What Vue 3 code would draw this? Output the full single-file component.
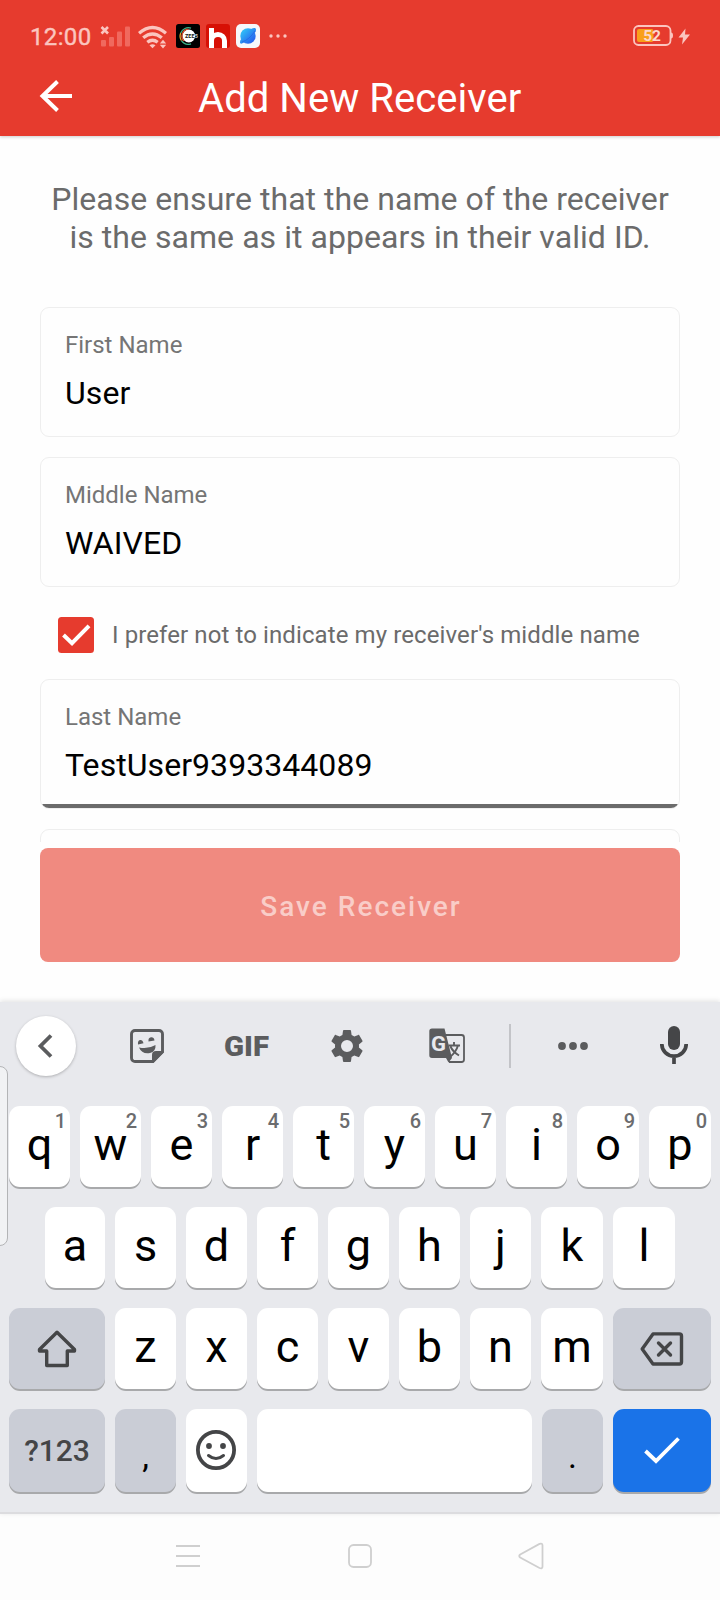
<script setup>
const topKeys = 'qwertyuiop'.split('').map((letter, i) => ({ letter, digit: (i + 1) % 10 }))
const homeKeys = 'asdfghjkl'.split('')
const bottomKeys = 'zxcvbnm'.split('')
</script>

<template>
  <div class="screen">
    <header class="header">
      <div class="status">
        <span class="clock">12:00</span>
        <svg class="signal" width="30" height="24" viewBox="0 0 30 24">
          <path d="M1.500 3l6.500 6.500M8 3l-6.500 6.500" stroke="#fbc5bf" stroke-width="2.600" />
          <g fill="#f0695e">
            <rect x="1" y="16" width="5" height="6.500" rx="1" />
            <rect x="9" y="13" width="5" height="9.500" rx="1" />
            <rect x="17" y="7.500" width="5" height="15" rx="1" />
            <rect x="25" y="2.500" width="5" height="20" rx="1" />
          </g>
        </svg>
        <svg class="wifi" width="29" height="24" viewBox="0 0 29 24">
          <g fill="none" stroke="#fbc5bf" stroke-width="3.300">
            <path d="M1 8.200Q14.500 -3.200 28 8.200" />
            <path d="M5.200 12.800Q14.500 5.200 23.800 12.800" />
            <path d="M9.300 17.200Q14.500 13.200 19.700 17.200" />
          </g>
          <path d="M11.500 20.300Q14.500 18.300 17.500 20.300L14.500 23.300z" fill="#fbc5bf" />
          <path d="M25 14.800l3.200 3.700h-6.400zM25 23.500l3.200-3.700h-6.400z" fill="#fbc5bf" />
        </svg>
        <svg class="app first" width="24" height="24" viewBox="0 0 24 24">
          <rect width="24" height="24" rx="2.500" fill="#000" />
          <circle cx="12.800" cy="12" r="6.400" fill="#fff" />
          <g fill="none" stroke-width="1.300">
            <path d="M15 4.100A8.300 8.300 0 0 0 4.700 9" stroke="#39b48b" />
            <path d="M4.700 9A8.300 8.300 0 0 0 5.500 16.700" stroke="#e9a32e" />
            <path d="M5.500 16.700A8.300 8.300 0 0 0 15 19.900" stroke="#39b48b" />
            <path d="M12.500 5.200A6.900 6.900 0 0 0 8 17" stroke="#e4512e" />
          </g>
          <text x="9" y="13.900" font-size="5.500" font-weight="700" fill="#222">ZEE</text>
          <text x="18.800" y="13.900" font-size="5.500" font-weight="700" fill="#ccc">5</text>
        </svg>
        <svg class="app" width="24" height="24" viewBox="0 0 24 24">
          <rect width="24" height="24" rx="3" fill="#d71005" />
          <path d="M5.500 4v20M5.500 24V16.800a6.500 6.200 0 0 1 13 0V24" fill="none" stroke="#fff" stroke-width="5" />
        </svg>
        <svg class="app" width="24" height="24" viewBox="0 0 24 24">
          <defs>
            <linearGradient id="planet" x1="0" y1="0" x2="1" y2="1">
              <stop offset=".2" stop-color="#2fb7f6" /><stop offset=".8" stop-color="#2767ee" />
            </linearGradient>
          </defs>
          <rect width="24" height="24" rx="5" fill="#f6f8fb" />
          <circle cx="12" cy="12" r="7.700" fill="url(#planet)" />
          <path d="M15 5C19 3 21 4 19.500 8L8 18.500C5 20.500 3 20 4.500 16z" fill="url(#planet)" />
          <path d="M6 18Q13 16 19 7" fill="none" stroke="#2465e4" stroke-width=".8" />
        </svg>
        <svg class="more" width="18" height="6" viewBox="0 0 18 6" fill="#fbc5bf">
          <circle cx="2" cy="3" r="1.700" /><circle cx="9" cy="3" r="1.700" /><circle cx="16" cy="3" r="1.700" />
        </svg>
        <svg class="battery" width="58" height="22" viewBox="0 0 58 22">
          <rect x="1" y="1" width="36.500" height="19" rx="4.500" fill="none" stroke="#fbc5bf" stroke-width="1.800" />
          <path d="M38 7.500q2 0 2 3t-2 3z" fill="#fbc5bf" />
          <rect x="4" y="4" width="16.500" height="13" rx="2" fill="#f9a01b" />
          <text x="10.200" y="16" font-size="15.500" font-weight="700" fill="#fcd9cc">52</text>
          <path d="M52.500 3.500L45.500 12.500h4.500L49 19.500L57 9.500H52z" fill="#fbc5bf" />
        </svg>
      </div>
      <div class="bar">
        <svg class="back" width="34" height="34" viewBox="0 0 34 34">
          <path d="M33 17H4M18.500 2.500L3.500 17l15 14.500" fill="none" stroke="#fff" stroke-width="4" />
        </svg>
        <h1 class="title">Add New Receiver</h1>
      </div>
    </header>

    <main class="content">
      <p class="hint">Please ensure that the name of the receiver<br />is the same as it appears in their valid ID.</p>
      <div class="form">
        <div class="field"><span class="label">First Name</span><span class="value">User</span></div>
        <div class="field"><span class="label">Middle Name</span><span class="value">WAIVED</span></div>
        <div class="waive">
          <svg class="check" width="36" height="36" viewBox="0 0 36 36">
            <rect width="36" height="36" rx="3.500" fill="#e63b2e" />
            <path d="M5.500 18l8.500 8.200L31 8.800" fill="none" stroke="#fff" stroke-width="4" />
          </svg>
          <span class="waive-text">I prefer not to indicate my receiver's middle name</span>
        </div>
        <div class="field focused"><span class="label">Last Name</span><span class="value">TestUser9393344089</span></div>
        <div class="field"></div>
      </div>
      <button class="save">Save Receiver</button>
    </main>

    <section class="keyboard">
      <div class="handle"></div>
      <div class="tools">
        <span class="collapse">
          <svg width="16" height="24" viewBox="0 0 16 24"><path d="M14 1.500L3.500 12L14 22.500" fill="none" stroke="#5b5c5e" stroke-width="3.800" /></svg>
        </span>
        <svg class="sticker" width="34" height="34" viewBox="0 0 34 34">
          <path d="M5 1.500h24a3.500 3.500 0 0 1 3.500 3.500v18L23 32.500H5A3.500 3.500 0 0 1 1.500 29V5A3.500 3.500 0 0 1 5 1.500z" fill="none" stroke="#5b5c5e" stroke-width="2.900" />
          <path d="M33 22h-7q-4 0-4 4v7.500h1.500L34 23z" fill="#5b5c5e" />
          <path d="M9 18.500Q18 20.500 25.500 16Q26 22.500 20 24Q12 25.500 9 18.500zM8 15.500q-.500-4 2-4.500t3.500 3.200zM18.500 12.500q-.500-4 2.500-4.300t3.500 3.300z" fill="#5b5c5e" />
        </svg>
        <svg class="gif" width="48" height="40" viewBox="0 0 48 40">
          <text x="0" y="29.500" font-size="27" font-weight="900" textLength="45" lengthAdjust="spacingAndGlyphs" fill="#5b5c5e">GIF</text>
        </svg>
        <svg class="gear" width="40" height="40" viewBox="0 0 24 24">
          <path fill="#5b5c5e" d="M19.140 12.940c.040-.300.060-.610.060-.940 0-.320-.020-.640-.070-.940l2.030-1.580c.180-.140.230-.410.120-.610l-1.920-3.320c-.120-.220-.370-.290-.590-.220l-2.390.960c-.500-.380-1.030-.700-1.620-.940l-.360-2.540c-.040-.240-.240-.410-.480-.410h-3.840c-.240 0-.430.170-.470.410l-.360 2.540c-.590.240-1.130.570-1.620.940l-2.390-.960c-.220-.080-.470 0-.590.220L2.740 8.870c-.120.210-.080.470.120.610l2.030 1.580c-.050.300-.090.630-.090.940s.020.640.070.940l-2.030 1.580c-.180.140-.230.410-.120.610l1.920 3.320c.120.220.370.290.590.220l2.390-.960c.500.380 1.030.700 1.620.940l.360 2.540c.050.240.240.410.480.410h3.840c.240 0 .440-.170.470-.410l.360-2.540c.590-.240 1.130-.560 1.620-.940l2.390.960c.220.080.470 0 .590-.220l1.920-3.320c.120-.220.070-.470-.120-.610zM12 15.600A3.600 3.600 0 1 1 12 8.400a3.600 3.600 0 0 1 0 7.200z" />
        </svg>
        <svg class="translate" width="36" height="36" viewBox="0 0 36 36">
          <path d="M17 7h15.500a2.500 2.500 0 0 1 2.500 2.500v22a2.500 2.500 0 0 1-2.500 2.500H20" fill="none" stroke="#5b5c5e" stroke-width="1.800" />
          <path d="M3 .500h12.500L23 30l-3.500 4.500L17 30H3a2.700 2.700 0 0 1-2.700-2.700V3.200A2.700 2.700 0 0 1 3 .500z" fill="#5b5c5e" />
          <path d="M19.500 17.500H31M25 14v3.500M29 17.500Q27 24 21.500 28.500M21.500 18.500Q24 24 30 27.500" fill="none" stroke="#5b5c5e" stroke-width="1.900" />
          <text x="2" y="22.500" font-size="20" font-weight="700" textLength="15" lengthAdjust="spacingAndGlyphs" fill="#e8e9ed">G</text>
        </svg>
        <span class="divider"></span>
        <svg class="dots" width="30" height="8" viewBox="0 0 30 8" fill="#5b5c5e">
          <circle cx="4" cy="4" r="3.900" /><circle cx="15" cy="4" r="3.900" /><circle cx="26" cy="4" r="3.900" />
        </svg>
        <svg class="mic" width="28" height="38" viewBox="0 0 28 38">
          <rect x="8" y="0" width="12" height="24" rx="6" fill="#454648" />
          <path d="M1.800 18a12.200 12.200 0 0 0 24.400 0M14 30v8" fill="none" stroke="#454648" stroke-width="3.700" />
        </svg>
      </div>

      <div class="row top">
        <div v-for="k in topKeys" :key="k.letter" class="key"><span class="digit">{{ k.digit }}</span>{{ k.letter }}</div>
      </div>
      <div class="row home">
        <div v-for="k in homeKeys" :key="k" class="key">{{ k }}</div>
      </div>
      <div class="row">
        <div class="key grey left">
          <svg class="glyph" width="40" height="38" viewBox="0 0 40 38">
            <path d="M20 2.300L37.500 19.500V21H30.300V35.500H9.700V21H2.500V19.500z" fill="none" stroke="#444547" stroke-width="3.400" stroke-linejoin="round" />
          </svg>
        </div>
        <div v-for="k in bottomKeys" :key="k" class="key" :class="{ wide: k === 'm' }">{{ k }}</div>
        <div class="key grey right">
          <svg class="glyph" width="44" height="34" viewBox="0 0 44 34">
            <path d="M13 1.900H39.500a2 2 0 0 1 2 2V30a2 2 0 0 1-2 2H13L2.200 17z" fill="none" stroke="#444547" stroke-width="3.400" stroke-linejoin="round" />
            <path d="M18.500 11l12 12M30.500 11l-12 12" stroke="#444547" stroke-width="3.400" stroke-linecap="round" />
          </svg>
        </div>
      </div>
      <div class="row last">
        <div class="key grey left mode">?123</div>
        <div class="key grey punct">,</div>
        <div class="key">
          <svg class="face" width="40" height="40" viewBox="0 0 40 40">
            <circle cx="20" cy="20" r="18.100" fill="none" stroke="#444547" stroke-width="3.800" />
            <circle cx="13" cy="16" r="2.900" fill="#444547" /><circle cx="27" cy="16" r="2.900" fill="#444547" />
            <path d="M12.500 25.500Q20 31.500 27.500 25.500" fill="none" stroke="#444547" stroke-width="3" stroke-linecap="round" />
          </svg>
        </div>
        <div class="key space"></div>
        <div class="key grey punct">.</div>
        <div class="key blue right">
          <svg class="face" width="36" height="28" viewBox="0 0 36 28">
            <path d="M1.500 15L12 25L34.500 2.500" fill="none" stroke="#fff" stroke-width="3.800" />
          </svg>
        </div>
      </div>
    </section>

    <nav class="nav">
      <svg width="24" height="24" viewBox="0 0 24 24"><path d="M0 2h24M0 12h24M0 22h24" stroke="#cfcfcf" stroke-width="1.800" /></svg>
      <svg width="24" height="24" viewBox="0 0 24 24"><rect x="1" y="1" width="22" height="22" rx="4.500" fill="none" stroke="#cfcfcf" stroke-width="1.800" /></svg>
      <svg width="26" height="28" viewBox="0 0 26 28"><path d="M2.200 12.500L21.500 1.900Q24.500.900 24.500 3.500V24.500Q24.500 27.100 21.500 26L2.200 15.500Q.300 14 2.200 12.500z" fill="none" stroke="#cfcfcf" stroke-width="1.800" /></svg>
    </nav>
  </div>
</template>

<style>
body {
  background: #fefefe;
}
</style>

<style scoped>
.screen {
  width: 720px;
  height: 1600px;
  display: flex;
  flex-direction: column;
  overflow: hidden;
  background: #fefefe;
  font-family: Roboto, "Liberation Sans", sans-serif;
}
.screen * {
  box-sizing: border-box;
}
svg {
  display: block;
  flex: none;
}
.header {
  height: 136px;
  background: #e63b2e;
  box-shadow: 0 1px 3px rgba(0, 0, 0, 0.2);
  flex: none;
}
.status {
  height: 72px;
  padding: 0 30px;
  display: flex;
  align-items: center;
}
.clock {
  width: 70px;
  font-size: 24px;
  line-height: 28px;
  letter-spacing: 0.35px;
  margin-top: 2px;
  color: #fbc5bf;
  -webkit-text-stroke: 0.4px #fbc5bf;
}
.wifi {
  margin: 1px 0 0 8px;
}
.app {
  margin-left: 6px;
}
.app.first {
  margin-left: 9px;
}
.more {
  margin-left: 9px;
}
.battery {
  margin-left: auto;
  margin-right: -1px;
}
.bar {
  height: 64px;
  padding-left: 39px;
  display: flex;
  align-items: center;
}
.back {
  margin-top: -16px;
}
.title {
  margin: -11px 0 0 125px;
  font-size: 40px;
  line-height: 48px;
  font-weight: 400;
  letter-spacing: 0.06px;
  color: #fff;
  white-space: nowrap;
}
.content {
  height: 866px;
  flex: none;
  padding: 44px 40px 0;
}
.hint {
  margin: 0 -20px;
  font-size: 32px;
  line-height: 38px;
  letter-spacing: 0.05px;
  text-align: center;
  color: #6b6b6b;
  white-space: nowrap;
}
.form {
  height: 535px;
  margin-top: 51px;
  overflow: hidden;
}
.field {
  height: 130px;
  margin-bottom: 20px;
  padding: 23px 24px 0;
  border: 1px solid #eee;
  border-radius: 9px;
  display: flex;
  flex-direction: column;
  gap: 14px;
}
.field.focused {
  position: relative;
  overflow: hidden;
}
.focused::after {
  content: "";
  position: absolute;
  left: 0;
  right: 0;
  bottom: 0;
  height: 4px;
  background: #6b6b6b;
}
.label {
  font-size: 24px;
  line-height: 28px;
  color: #757575;
}
.value {
  font-size: 32px;
  line-height: 40px;
  letter-spacing: 0.06px;
  color: #000;
}
.waive {
  display: flex;
  align-items: center;
  gap: 18px;
  height: 36px;
  margin: 30px 0 26px 18px;
}
.waive-text {
  font-size: 24px;
  line-height: 28px;
  letter-spacing: 0.1px;
  color: #6b6b6b;
  white-space: nowrap;
}
.save {
  display: block;
  width: 640px;
  height: 114px;
  margin-top: 6px;
  padding: 2px 0 0 2px;
  border: 0;
  border-radius: 8px;
  background: #f08a80;
  color: #f9cdc8;
  font-family: inherit;
  font-size: 28px;
  font-weight: 500;
  letter-spacing: 2px;
}
.keyboard {
  position: relative;
  height: 512px;
  flex: none;
  background: #e8e9ed;
  border-bottom: 2px solid #dcdcdf;
  box-shadow: 0 -1px 5px rgba(0, 0, 0, 0.12);
}
.handle {
  position: absolute;
  left: -10px;
  top: 64px;
  width: 18px;
  height: 180px;
  background: #f1f2f4;
  border: 1px solid #b3b4b6;
  border-radius: 8px;
}
.tools {
  height: 88px;
  padding-left: 16px;
  display: flex;
  align-items: center;
}
.collapse {
  width: 60px;
  height: 60px;
  padding-right: 2px;
  border-radius: 50%;
  background: #fff;
  display: flex;
  align-items: center;
  justify-content: center;
  box-shadow: 0 1px 3px rgba(0, 0, 0, 0.25);
}
.sticker {
  margin-left: 54px;
}
.gif {
  margin-left: 60px;
}
.gear {
  margin-left: 55px;
}
.translate {
  margin-left: 62px;
}
.divider {
  width: 2px;
  height: 44px;
  margin-left: 44px;
  background: #c3c4c8;
}
.dots {
  margin-left: 47px;
}
.mic {
  margin: -2px 0 0 72px;
}
.row {
  height: 81px;
  margin: 16px 9px 0;
  display: flex;
  gap: 10px;
}
.row + .row {
  margin-top: 20px;
}
.row.home {
  margin-left: 45px;
  margin-right: 45px;
}
.row.last {
  height: 83px;
}
.key {
  position: relative;
  flex: 0 0 61px;
  min-width: 0;
  padding-bottom: 3px;
  border-radius: 11px;
  background: #fff;
  box-shadow: 0 2px 0 #a8a9ab;
  display: flex;
  align-items: center;
  justify-content: center;
  font-size: 45px;
  line-height: 52px;
  color: #000;
}
.top .key:nth-child(n + 9),
.home .key:nth-child(n + 8),
.key.wide {
  flex-basis: 62px;
}
.home .key:first-child {
  flex-basis: 60px;
}
.digit {
  position: absolute;
  top: 3px;
  right: 4px;
  font-size: 20px;
  line-height: 24px;
  font-weight: 500;
  color: #6b6c6e;
}
.grey {
  background: #cacdd6;
}
.key.left {
  flex-basis: 96px;
}
.key.right {
  flex-basis: 98px;
}
.blue {
  background: #1a73e8;
}
.key.space {
  flex-basis: 275px;
}
.mode {
  padding-bottom: 0;
  font-size: 30px;
  font-weight: 500;
  color: #444547;
}
.punct {
  padding-top: 14px;
  font-size: 34px;
}
.glyph {
  margin-top: 3px;
}
.face {
  margin: 1px 1px 0 0;
}
.nav {
  height: 86px;
  background: #fdfdfd;
  padding: 0 176px 2px;
  display: flex;
  align-items: center;
  justify-content: space-between;
}
.nav svg:nth-child(2) {
  margin-left: 2px;
}
</style>
